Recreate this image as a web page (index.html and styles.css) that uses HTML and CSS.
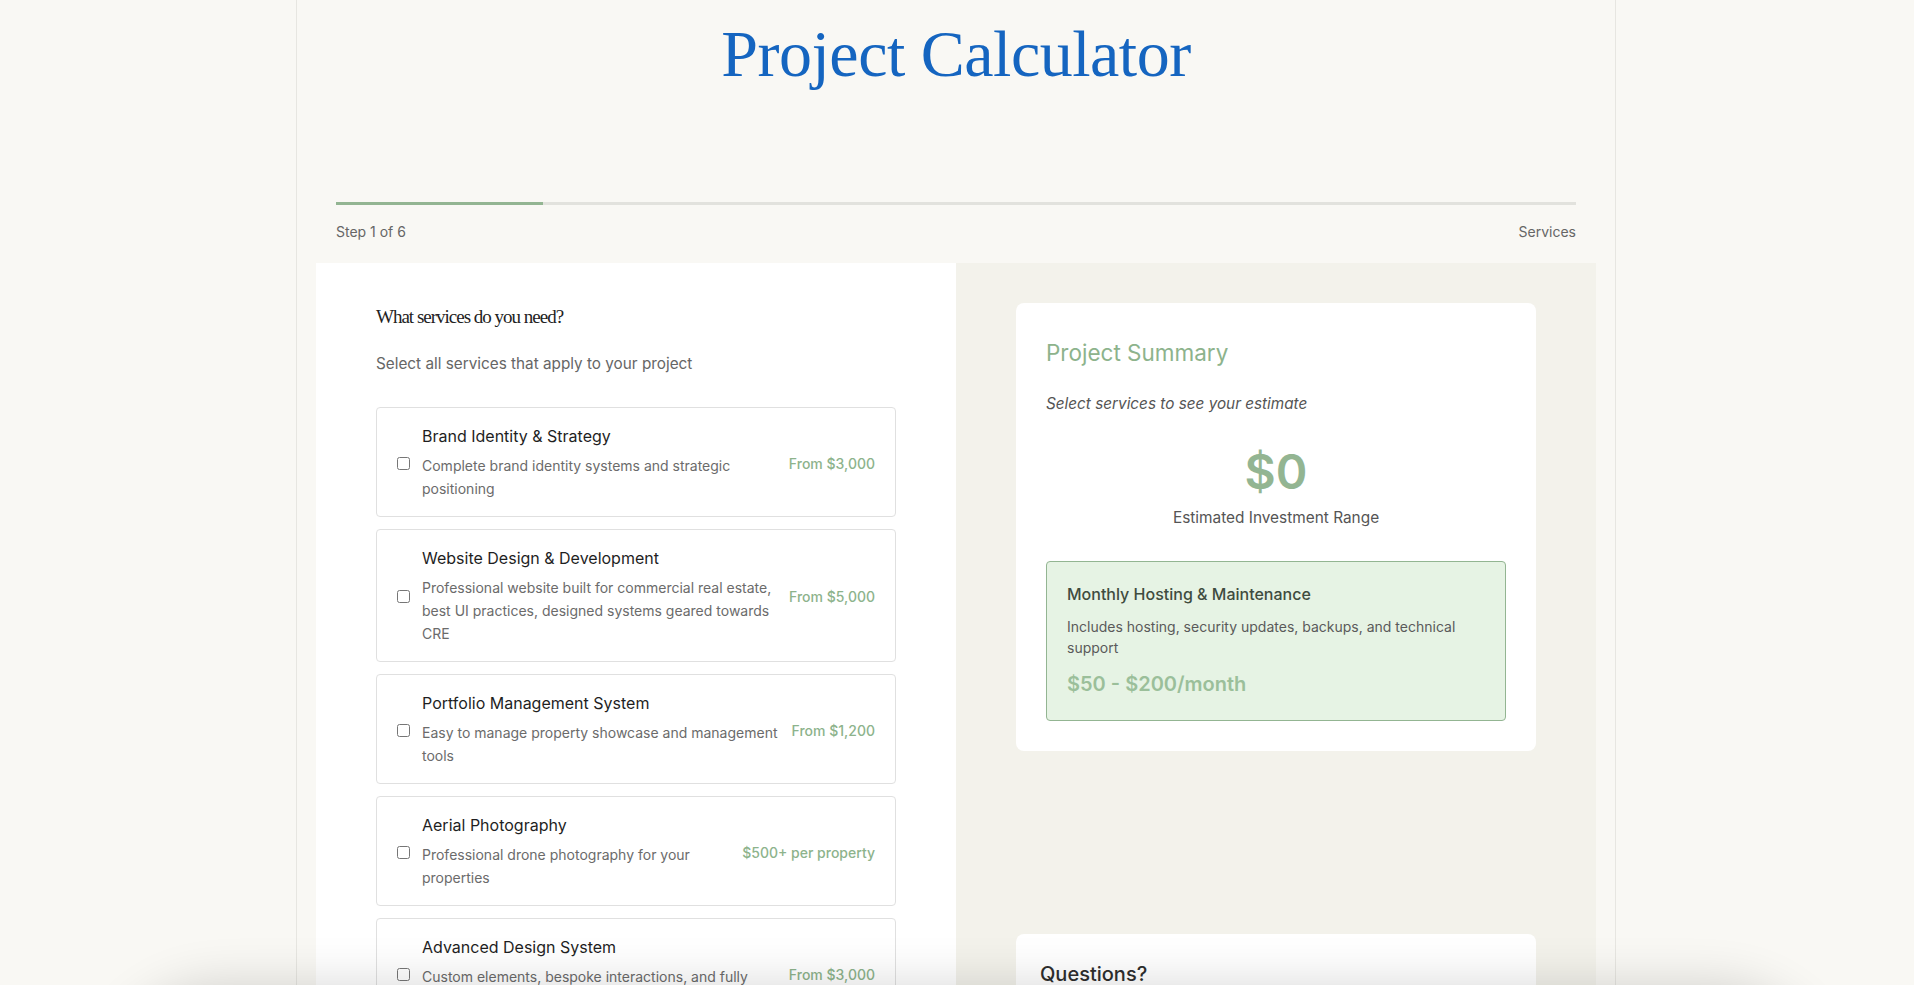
FILE: index.html
```html
<!DOCTYPE html>
<html lang="en">
<head>
<meta charset="utf-8">
<title>Project Calculator</title>
<link rel="stylesheet" href="styles.css">
</head>
<body>
<div class="container">
  <header class="hero">
    <h1 class="hero-title">Project Calculator</h1>
  </header>

  <div class="progress">
    <div class="progress-track"><div class="progress-fill" style="width: 16.667%"></div></div>
    <div class="progress-labels">
      <span>Step 1 of 6</span>
      <span>Services</span>
    </div>
  </div>

  <div class="calc">
    <section class="panel panel-form">
      <h2 class="step-title">What services do you need?</h2>
      <p class="step-sub">Select all services that apply to your project</p>

      <div class="service-list">
        <label class="service">
          <input type="checkbox" class="service-check">
          <div class="service-info">
            <div class="service-name">Brand Identity &amp; Strategy</div>
            <div class="service-desc">Complete brand identity systems and strategic positioning</div>
          </div>
          <div class="service-price">From $3,000</div>
        </label>
        <label class="service">
          <input type="checkbox" class="service-check">
          <div class="service-info">
            <div class="service-name">Website Design &amp; Development</div>
            <div class="service-desc">Professional website built for commercial real estate, best UI practices, designed systems geared towards CRE</div>
          </div>
          <div class="service-price">From $5,000</div>
        </label>
        <label class="service">
          <input type="checkbox" class="service-check">
          <div class="service-info">
            <div class="service-name">Portfolio Management System</div>
            <div class="service-desc">Easy to manage property showcase and management tools</div>
          </div>
          <div class="service-price">From $1,200</div>
        </label>
        <label class="service">
          <input type="checkbox" class="service-check">
          <div class="service-info">
            <div class="service-name">Aerial Photography</div>
            <div class="service-desc">Professional drone photography for your properties</div>
          </div>
          <div class="service-price">$500+ per property</div>
        </label>
        <label class="service">
          <input type="checkbox" class="service-check">
          <div class="service-info">
            <div class="service-name">Advanced Design System</div>
            <div class="service-desc">Custom elements, bespoke interactions, and fully tailored component libraries</div>
          </div>
          <div class="service-price">From $3,000</div>
        </label>
      </div>
    </section>

    <aside class="panel panel-summary">
      <div class="summary-card">
        <h3 class="summary-title">Project Summary</h3>
        <p class="summary-hint">Select services to see your estimate</p>
        <div class="summary-total">$0</div>
        <div class="summary-label">Estimated Investment Range</div>
        <div class="hosting">
          <div class="hosting-title">Monthly Hosting &amp; Maintenance</div>
          <div class="hosting-desc">Includes hosting, security updates, backups, and technical support</div>
          <div class="hosting-price">$50 - $200/month</div>
        </div>
      </div>

      <div class="help-card">
        <h4 class="help-title">Questions?</h4>
      </div>
    </aside>
  </div>
</div>
<div class="bottom-shadow"></div>
</body>
</html>
```

FILE: styles.css
```css
* { box-sizing: border-box; }

html, body {
  margin: 0;
  padding: 0;
}

body {
  background: #f9f8f4;
  font-family: Inter, "Noto Sans", sans-serif;
  color: #333;
  overflow: hidden;
}

.container {
  width: 1320px;
  margin-left: calc((100% - 1322px) / 2);
  border-left: 1px solid #e7e6e1;
  border-right: 1px solid #e7e6e1;
  padding: 14px 19px 0;
  min-height: 100vh;
}

.hero {
  text-align: center;
}

.hero-title {
  margin: 0;
  font-family: "Liberation Serif", serif;
  font-weight: 400;
  font-size: 66px;
  line-height: 1.2;
  letter-spacing: -0.5px;
  color: #1565c0;
}

.progress {
  margin-top: 109px;
  padding: 0 20px;
}

.progress-track {
  height: 3px;
  background: #e2e2dd;
}

.progress-fill {
  height: 100%;
  background: #93b592;
}

.progress-labels {
  margin-top: 17px;
  display: flex;
  justify-content: space-between;
  font-size: 14px;
  line-height: 20px;
  color: #666;
}

.calc {
  margin-top: 21px;
  display: grid;
  grid-template-columns: 1fr 1fr;
}

.panel {
  padding: 40px 60px;
}

.panel-form {
  background: #fff;
}

.panel-summary {
  background: #f3f2eb;
}

.step-title {
  margin: 0;
  font-family: "Liberation Serif", serif;
  font-weight: 400;
  font-size: 19px;
  line-height: 28px;
  letter-spacing: -1px;
  color: #222;
}

.step-sub {
  margin: 22px 0 0;
  font-size: 15.3px;
  line-height: 22px;
  color: #666;
}

.service-list {
  margin-top: 32px;
  display: flex;
  flex-direction: column;
  gap: 12px;
}

.service {
  display: flex;
  align-items: center;
  gap: 10px;
  padding: 18px 20px 16px;
  border: 1px solid #e0e0e0;
  border-radius: 4px;
  background: #fff;
}

.service-check {
  margin: 0 2px 0 0;
  width: 13px;
  height: 13px;
  flex: none;
}

.service-info {
  flex: 1;
  min-width: 0;
}

.service-name {
  font-size: 16px;
  line-height: 20px;
  font-weight: 400;
  color: #1f1f1f;
}

.service-desc {
  margin-top: 8px;
  font-size: 14px;
  line-height: 23px;
  color: #6b6b6b;
}

.service-price {
  flex: none;
  font-size: 14px;
  font-weight: 500;
  color: #8db38c;
}

.summary-card {
  background: #fff;
  border-radius: 8px;
  padding: 36px 30px 30px;
}

.summary-title {
  margin: 0;
  font-size: 22.5px;
  line-height: 1.2;
  font-weight: 400;
  color: #8db38c;
}

.summary-hint {
  margin: 27px 0 0;
  font-size: 15.3px;
  line-height: 22px;
  font-style: italic;
  color: #555;
}

.summary-total {
  margin-top: 28px;
  text-align: center;
  font-size: 48px;
  line-height: 1.2;
  font-weight: 600;
  color: #93b592;
}

.summary-label {
  margin-top: 5px;
  text-align: center;
  font-size: 15.4px;
  line-height: 24px;
  color: #555;
}

.hosting {
  margin-top: 31px;
  background: #e6f3e4;
  border: 1px solid #93b592;
  border-radius: 4px;
  padding: 20px;
}

.hosting-title {
  font-size: 16px;
  line-height: 24px;
  font-weight: 500;
  color: #3f4c3f;
}

.hosting-desc {
  margin-top: 10px;
  font-size: 14px;
  line-height: 21px;
  color: #5a5a5a;
}

.hosting-price {
  margin-top: 10px;
  font-size: 20px;
  line-height: 32px;
  font-weight: 600;
  color: #9bbf9a;
}

.help-card {
  margin-top: 183px;
  background: #fff;
  border-radius: 8px;
  padding: 28px 24px 28px;
}

.help-title {
  margin: 0;
  font-size: 20px;
  line-height: 24px;
  font-weight: 500;
  color: #2e2e2e;
}

.bottom-shadow {
  position: fixed;
  left: 120px;
  right: 100px;
  top: calc(100% + 20px);
  height: 200px;
  border-radius: 100px;
  box-shadow: 0 -6px 50px 14px rgba(0, 0, 0, 0.16);
  pointer-events: none;
}
```
